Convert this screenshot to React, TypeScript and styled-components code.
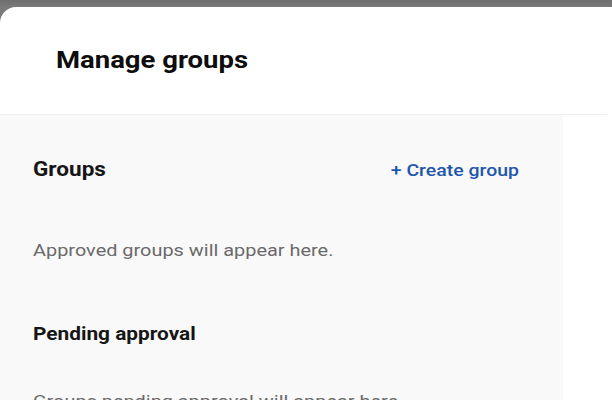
import React from "react";
import styled, { createGlobalStyle, css } from "styled-components";

const Global = createGlobalStyle`
  html, body { margin: 0; padding: 0; background: #ffffff; }
  body { font-family: Roboto, "Noto Sans", Arial, sans-serif; -webkit-font-smoothing: antialiased; }
`;

const stretched = (origin: "left" | "right" = "left") => css`
  display: inline-block;
  transform: scaleX(1.145);
  transform-origin: ${origin} center;
`;

const Page = styled.div`
  width: 612px;
  height: 400px;
  overflow: hidden;
  background: linear-gradient(#6e6e6e, #7a7a7a 7px);
  padding-top: 7px;
  box-sizing: border-box;
`;

const Sheet = styled.div`
  background: #ffffff;
  border-top-left-radius: 16px;
  height: 393px;
  overflow: hidden;
`;

const Header = styled.header`
  width: 607px;
  height: 108px;
  box-sizing: border-box;
  padding: 37px 0 0 56px;
  border-bottom: 1px solid #f0f0f0;
`;

const Title = styled.h1`
  margin: 0;
  font-size: 24px;
  line-height: 32px;
  font-weight: 700;
  color: #0d0d0d;
  ${stretched()}
`;

const Pane = styled.section`
  width: 563px;
  height: 300px;
  background: #f9f9f9;
  box-sizing: border-box;
  padding: 0 44px 0 33px;
  display: flex;
  flex-direction: column;
  align-items: flex-start;
`;

const Row = styled.div`
  align-self: stretch;
  display: flex;
  align-items: center;
  justify-content: space-between;
  height: 56px;
  padding-top: 27px;
`;

const SectionTitle = styled.h2<{ $size: number; $top?: number }>`
  margin: ${(p) => p.$top ?? 0}px 0 0;
  font-size: ${(p) => p.$size}px;
  line-height: 24px;
  font-weight: 700;
  color: #161616;
  ${stretched()}
`;

const LinkButton = styled.button`
  border: none;
  background: none;
  padding: 0;
  font-family: inherit;
  font-size: 17px;
  font-weight: 500;
  color: #1f56ad;
  cursor: pointer;
  ${stretched("right")}
`;

const Hint = styled.p<{ $top: number }>`
  margin: ${(p) => p.$top}px 0 0;
  font-size: 17.4px;
  line-height: 24px;
  color: #6a6a6a;
  ${stretched()}
`;

export default function App() {
  return (
    <>
      <Global />
      <Page>
        <Sheet>
          <Header>
            <Title>Manage groups</Title>
          </Header>
          <Pane>
            <Row>
              <SectionTitle $size={19.7}>Groups</SectionTitle>
              <LinkButton>+ Create group</LinkButton>
            </Row>
            <Hint $top={40}>Approved groups will appear here.</Hint>
            <SectionTitle $size={18.2} $top={60}>Pending approval</SectionTitle>
            <Hint $top={43}>Groups pending approval will appear here.</Hint>
          </Pane>
        </Sheet>
      </Page>
    </>
  );
}
